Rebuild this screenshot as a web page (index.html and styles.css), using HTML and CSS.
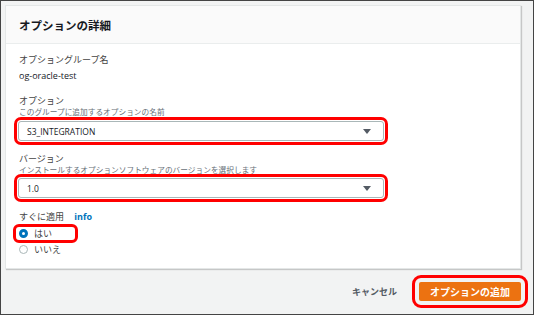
FILE: index.html
```html
<!DOCTYPE html>
<html lang="ja">
<head>
<meta charset="UTF-8">
<meta name="viewport" content="width=device-width, initial-scale=1.0">
<title>オプションの詳細</title>
<link rel="stylesheet" href="styles.css">
</head>
<body>

<div class="frame">
    <div class="panel">
        <div class="panel-header">
            <h2>オプションの詳細</h2>
        </div>

        <div class="panel-body">
            <div class="field">
                <div class="label">オプショングループ名</div>
                <div class="value">og-oracle-test</div>
            </div>

            <div class="field field-option">
                <div class="label">オプション</div>
                <div class="hint">このグループに追加するオプションの名前</div>
                <div class="select marked">
                    <span>S3_INTEGRATION</span>
                    <span class="caret"></span>
                </div>
            </div>

            <div class="field field-version">
                <div class="label">バージョン</div>
                <div class="hint">インストールするオプションソフトウェアのバージョンを選択します</div>
                <div class="select marked">
                    <span>1.0</span>
                    <span class="caret"></span>
                </div>
            </div>

            <div class="field field-apply">
                <div class="label">すぐに適用 <a class="info">info</a></div>
                <label class="radio marked-radio"><span class="dot checked"></span>はい</label>
                <label class="radio"><span class="dot"></span>いいえ</label>
            </div>
        </div>
    </div>

    <div class="footer">
        <button class="btn-cancel">キャンセル</button>
        <button class="btn-primary">オプションの追加</button>
    </div>
</div>

</body>
</html>
```

FILE: styles.css
```css
body {
    margin: 0;
    padding: 0;
    font-family: "Open Sans", "Noto Sans CJK JP", sans-serif;
    color: #16191f;
}
.frame {
    width: 534px;
    height: 315px;
    box-sizing: border-box;
    border: 1px solid #444;
    background-color: #f2f3f3;
    padding: 4px 12px 0 4px;
}
.panel {
    background-color: #fff;
    border: 1px solid #e4e7e7;
    box-shadow: 1px 1px 1px rgba(0, 0, 0, 0.18);
}
.panel-header {
    height: 37px;
    background-color: #fafafa;
    border-bottom: 1px solid #eaeded;
    padding-left: 13px;
    display: flex;
    align-items: center;
}
.panel-header h2 {
    margin: 0;
    font-size: 11.5px;
    font-weight: bold;
    color: #16191f;
}
.panel-body {
    padding: 10px 13px 12px 13px;
}
.label {
    font-size: 9px;
    line-height: 12px;
    color: #444;
}
.value {
    font-size: 9px;
    line-height: 12px;
    margin-top: 4px;
    color: #16191f;
}
.hint {
    font-size: 7.7px;
    line-height: 10px;
    color: #687078;
    white-space: nowrap;
}
.field-option {
    margin-top: 13px;
}
.field-version {
    margin-top: 12px;
}
.field-apply {
    margin-top: 13px;
}
.select {
    height: 20px;
    box-sizing: border-box;
    width: 366px;
    margin-left: -1px;
    border: 1px solid #aab7b8;
    border-radius: 2px;
    padding: 0 12px 0 8px;
    display: flex;
    align-items: center;
    justify-content: space-between;
    font-size: 8.5px;
    color: #16191f;
}
.field-option .select {
    margin-top: 4px;
}
.field-version .select {
    margin-top: 3px;
}
.marked {
    outline: 3px solid #f00;
    outline-offset: 1px;
    border-radius: 3px;
}
.caret {
    width: 0;
    height: 0;
    border-left: 4px solid transparent;
    border-right: 4px solid transparent;
    border-top: 5px solid #545b64;
}
.info {
    color: #0073bb;
    font-weight: bold;
    margin-left: 8px;
}
.radio {
    display: flex;
    align-items: center;
    height: 13px;
    width: 56px;
    margin-left: -3px;
    padding-left: 3px;
    font-size: 9px;
    color: #444;
}
.marked-radio {
    margin-top: 4px;
    outline: 3px solid #f00;
    border-radius: 3px;
}
.radio + .radio {
    margin-top: 2px;
    height: 14px;
}
.dot {
    width: 9px;
    height: 9px;
    box-sizing: border-box;
    border: 1px solid #aab7b8;
    border-radius: 50%;
    margin-right: 6px;
    background-color: #fff;
}
.dot.checked {
    border: 3px solid #0073bb;
}
.footer {
    display: flex;
    justify-content: flex-end;
    align-items: center;
    padding-top: 13px;
}
.btn-cancel {
    background: none;
    border: none;
    font-family: inherit;
    font-size: 9px;
    font-weight: bold;
    color: #545b64;
    padding: 0;
    margin-right: 22px;
}
.btn-primary {
    width: 102px;
    height: 19px;
    border: none;
    border-radius: 2px;
    background-color: #ec7211;
    color: #fff;
    font-family: inherit;
    font-size: 10px;
    font-weight: bold;
    padding: 0;
    outline: 3px solid #f00;
    outline-offset: 4px;
}
```
